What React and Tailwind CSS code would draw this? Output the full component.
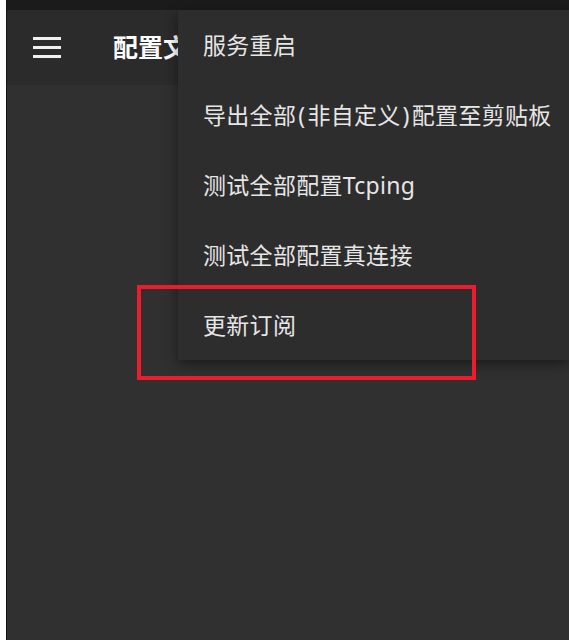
import React from "react";

const menuItems = [
  "服务重启",
  "导出全部(非自定义)配置至剪贴板",
  "测试全部配置Tcping",
  "测试全部配置真连接",
  "更新订阅",
];

// parens in the reference sit a little wider than the font gives
const renderLabel = (text) =>
  text.split(/([()])/).map((part, i) =>
    part === "(" || part === ")" ? (
      <span key={i} className="mx-[2px]">
        {part}
      </span>
    ) : (
      <span key={i}>{part}</span>
    )
  );

export default function App() {
  return (
    <div
      className="relative flex h-[640px] w-full overflow-hidden bg-white"
      style={{ fontFamily: '"Noto Sans", "Noto Sans CJK SC", sans-serif' }}
    >
      {/* white margin + thin edge */}
      <div className="w-[6px] bg-white" />
      <div className="w-px bg-[#151515]" />

      {/* Phone screen */}
      <div className="flex flex-1 flex-col">
        <div className="h-[10px] bg-[#1b1b1b]" />
        <div className="flex h-[75px] items-center bg-[#2b2b2b]">
          <div className="ml-[26px] flex w-[28px] flex-col gap-[6px]">
            <div className="h-[3px] bg-[#f0f0f0]" />
            <div className="h-[3px] bg-[#f0f0f0]" />
            <div className="h-[3px] bg-[#f0f0f0]" />
          </div>
          {/* title runs under the menu, so clip it at the menu's edge */}
          <div className="ml-[52px] w-[65px] overflow-hidden whitespace-nowrap text-[25px] font-semibold text-white">
            配置文件
          </div>
        </div>
        <div className="flex-1 bg-[#303030]" />
      </div>

      {/* Overflow menu */}
      <div className="absolute left-[178px] right-0 top-[10px] flex flex-col bg-[#2d2d2d] shadow-[0_4px_12px_rgba(0,0,0,0.45)]">
        {menuItems.map((item) => (
          <div
            key={item}
            className="flex h-[70px] items-center whitespace-nowrap pl-[25px] text-[23px] tracking-[0.3px] text-[#e6e6e6]"
          >
            {renderLabel(item)}
          </div>
        ))}
      </div>

      {/* Highlight box */}
      <div className="absolute left-[137px] top-[285px] h-[95px] w-[339px] border-4 border-[#ec1c2e]" />
    </div>
  );
}
